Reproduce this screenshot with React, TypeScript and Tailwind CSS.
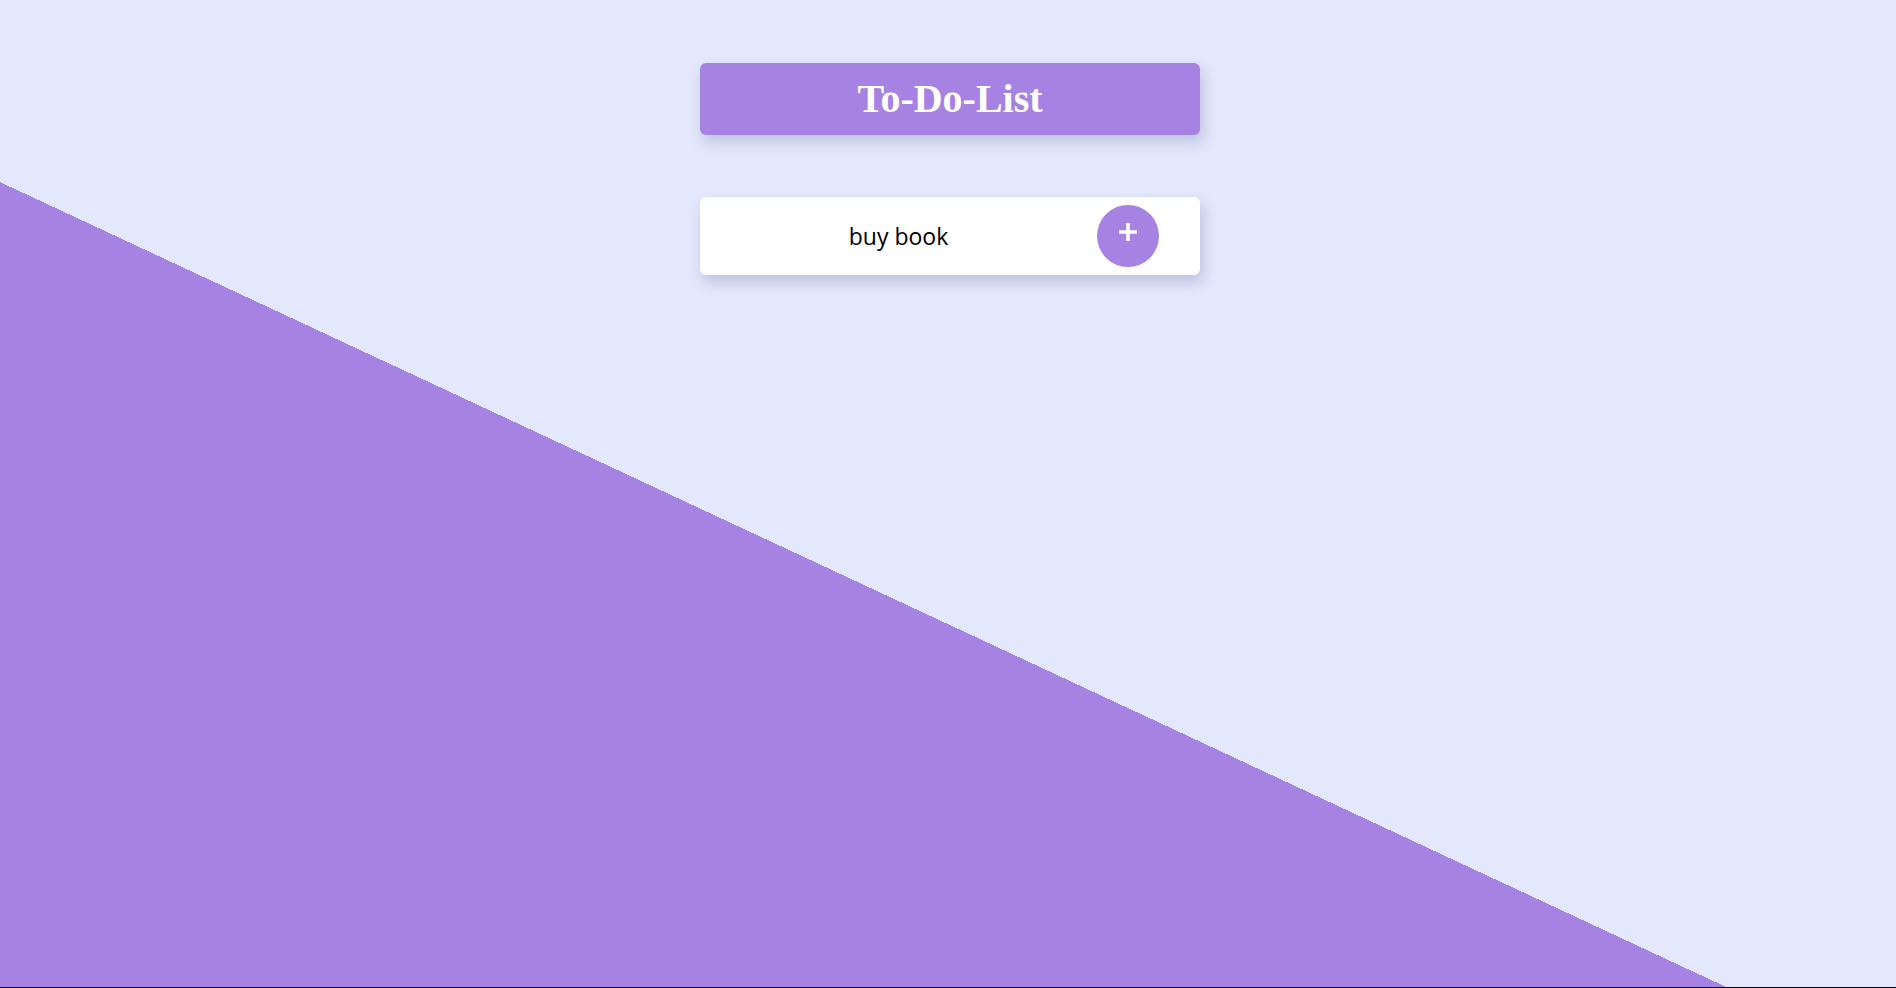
import { useState } from "react";

const App = () => {
  const [task, setTask] = useState("buy book");

  return (
    <div className="h-[988px] w-full border-b border-black bg-[linear-gradient(205deg,#e3e8fc_966.3px,#a683e3_966.3px)] flex flex-col items-center pt-[63px] pl-[4px]">
      {/* heading */}
      <div className="w-[500px] h-[72px] rounded-md bg-[#a683e3] shadow-[3px_7px_14px_rgba(80,80,130,0.25)] flex items-center justify-center">
        <h1 className="text-white text-[40px] font-bold leading-none font-['Liberation_Serif',serif]">
          To-Do-List
        </h1>
      </div>

      {/* input row */}
      <div className="mt-[62px] w-[500px] h-[78px] rounded-md bg-white shadow-[3px_7px_14px_rgba(80,80,130,0.25)] flex items-center pr-[41px]">
        <input
          type="text"
          value={task}
          onChange={(e) => setTask(e.target.value)}
          className="flex-1 min-w-0 h-full bg-transparent outline-none text-center text-black text-[23px] font-['Open_Sans',sans-serif]"
        />
        <button className="w-[62px] h-[62px] rounded-full bg-[#a683e3] flex items-center justify-center">
          <svg width="18" height="18" viewBox="0 0 18 18" className="mb-[8px]">
            <path d="M9 0v18M0 9h18" stroke="white" strokeWidth="3.6" />
          </svg>
        </button>
      </div>
    </div>
  );
};

export default App;
